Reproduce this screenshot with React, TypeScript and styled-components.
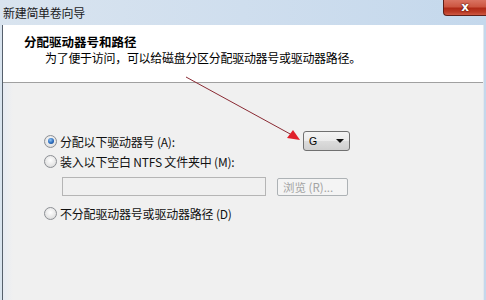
import React from "react";
import styled, { createGlobalStyle } from "styled-components";

const Global = createGlobalStyle`
  html, body { margin: 0; padding: 0; background: #f0f0f0; }
  body { font-family: "Noto Sans CJK SC", "Noto Sans", sans-serif; }
`;

const Window = styled.div`
  position: relative;
  width: 486px;
  height: 300px;
  display: flex;
  flex-direction: column;
  overflow: hidden;
  background: linear-gradient(90deg, #d9e4ef 0%, #cfdeee 50%, #c4d8ec 100%);
`;

const TitleBar = styled.div`
  height: 25px;
  display: flex;
  align-items: flex-start;
  flex-shrink: 0;
`;

const Title = styled.div`
  padding-left: 3px;
  line-height: 25px;
  font-size: 12px;
  color: #1b1b1b;
  letter-spacing: -0.3px;
`;

const CloseButton = styled.div`
  margin-left: auto;
  width: 43px;
  height: 16px;
  box-sizing: border-box;
  border: 1px solid #5e1f18;
  border-top: none;
  border-right: none;
  border-radius: 0 0 0 4px;
  background: linear-gradient(180deg, #d97362 0%, #cc5641 45%, #b02a17 55%, #bb3b26 80%, #cf5a44 100%);
  color: #ffffff;
  font-family: "DejaVu Sans", sans-serif;
  font-weight: bold;
  font-size: 12px;
  line-height: 15px;
  text-align: center;
  text-shadow: 0 0 2px #4a120b, 0 0 1px #4a120b;
`;

const Client = styled.div`
  flex: 1;
  display: flex;
  flex-direction: column;
  margin: 0 2px 0 2px;
  border-left: 1px solid #56606c;
  border-right: 1px solid #e4e8ee;
  background: #f0f0f0;
`;

const Header = styled.div`
  height: 58px;
  box-sizing: border-box;
  padding: 9px 0 0 21px;
  background: #ffffff;
  border-bottom: 1px solid #a0a0a0;
  flex-shrink: 0;
`;

const HeaderTitle = styled.div`
  font-size: 12.5px;
  font-weight: bold;
  line-height: 16px;
  color: #000;
`;

const HeaderSub = styled.div`
  margin-left: 21px;
  font-size: 12px;
  line-height: 16px;
  color: #000;
  letter-spacing: -0.3px;
`;

const Content = styled.div`
  flex: 1;
  padding: 48px 0 0 41px;
  display: flex;
  flex-direction: column;
  background: linear-gradient(90deg, #e7ebf3 0px, #f0f0f0 10px);
`;

const OptionRow = styled.div<{ $height: number; $mt: number }>`
  display: flex;
  align-items: center;
  height: ${(p) => p.$height}px;
  margin-top: ${(p) => p.$mt}px;
`;

const Radio = styled.span<{ $checked?: boolean }>`
  position: relative;
  width: 13px;
  height: 13px;
  box-sizing: border-box;
  border-radius: 50%;
  border: 1px solid #8c8f94;
  background: radial-gradient(circle at 50% 40%, #ffffff 0%, #e6e6e6 60%, #cfcfcf 100%);
  flex-shrink: 0;
  &::after {
    content: "";
    display: ${(p) => (p.$checked ? "block" : "none")};
    position: absolute;
    left: 2.5px;
    top: 2.5px;
    width: 6px;
    height: 6px;
    border-radius: 50%;
    background: radial-gradient(circle at 40% 35%, #8fc4f4 0%, #2a6bbd 55%, #163b75 100%);
  }
`;

const Label = styled.span<{ $width?: number }>`
  margin-left: 3px;
  font-size: 12px;
  color: #111;
  white-space: nowrap;
  letter-spacing: -0.2px;
  width: ${(p) => (p.$width ? `${p.$width}px` : "auto")};
`;

const Combo = styled.div`
  width: 47px;
  height: 20px;
  box-sizing: border-box;
  border: 1px solid #707070;
  border-radius: 3px;
  background: linear-gradient(180deg, #f4f4f4 0%, #ebebeb 50%, #dcdcdc 51%, #cfcfcf 100%);
  display: flex;
  align-items: center;
  padding: 0 5px;
  font-family: "Liberation Sans", sans-serif;
  font-size: 10.5px;
  color: #000;
`;

const ComboArrow = styled.span`
  margin-left: auto;
  width: 0;
  height: 0;
  border-left: 4px solid transparent;
  border-right: 4px solid transparent;
  border-top: 4px solid #111;
`;

const PathRow = styled.div`
  display: flex;
  align-items: center;
  margin-top: 8px;
  padding-left: 18px;
  gap: 11px;
`;

const PathInput = styled.div`
  width: 204px;
  height: 19px;
  box-sizing: border-box;
  border: 1px solid #b5b5b5;
  background: #f0f0f0;
`;

const BrowseButton = styled.div`
  width: 71px;
  height: 18px;
  box-sizing: border-box;
  border: 1px solid #adb2b5;
  border-radius: 2px;
  background: #f4f4f4;
  color: #a3a3a3;
  font-size: 11.5px;
  line-height: 16px;
  padding-left: 5px;
  white-space: nowrap;
`;

const Annotation = styled.svg`
  position: absolute;
  left: 0;
  top: 0;
  width: 486px;
  height: 300px;
  pointer-events: none;
`;

export default function App() {
  return (
    <>
      <Global />
      <Window>
        <TitleBar>
          <Title>新建简单卷向导</Title>
          <CloseButton>x</CloseButton>
        </TitleBar>
        <Client>
          <Header>
            <HeaderTitle>分配驱动器号和路径</HeaderTitle>
            <HeaderSub>为了便于访问，可以给磁盘分区分配驱动器号或驱动器路径。</HeaderSub>
          </Header>
          <Content>
            <OptionRow $height={20} $mt={0}>
              <Radio $checked />
              <Label $width={243}>分配以下驱动器号 (A):</Label>
              <Combo>
                G
                <ComboArrow />
              </Combo>
            </OptionRow>
            <OptionRow $height={16} $mt={2}>
              <Radio />
              <Label>装入以下空白 NTFS 文件夹中 (M):</Label>
            </OptionRow>
            <PathRow>
              <PathInput />
              <BrowseButton>浏览 (R)...</BrowseButton>
            </PathRow>
            <OptionRow $height={16} $mt={9}>
              <Radio />
              <Label>不分配驱动器号或驱动器路径 (D)</Label>
            </OptionRow>
          </Content>
        </Client>
        <Annotation viewBox="0 0 486 300">
          <line x1="186" y1="77" x2="292" y2="135" stroke="#8a2a33" strokeWidth="1" />
          <polygon points="300,140 287,138 293,130" fill="#e0202a" />
        </Annotation>
      </Window>
    </>
  );
}
